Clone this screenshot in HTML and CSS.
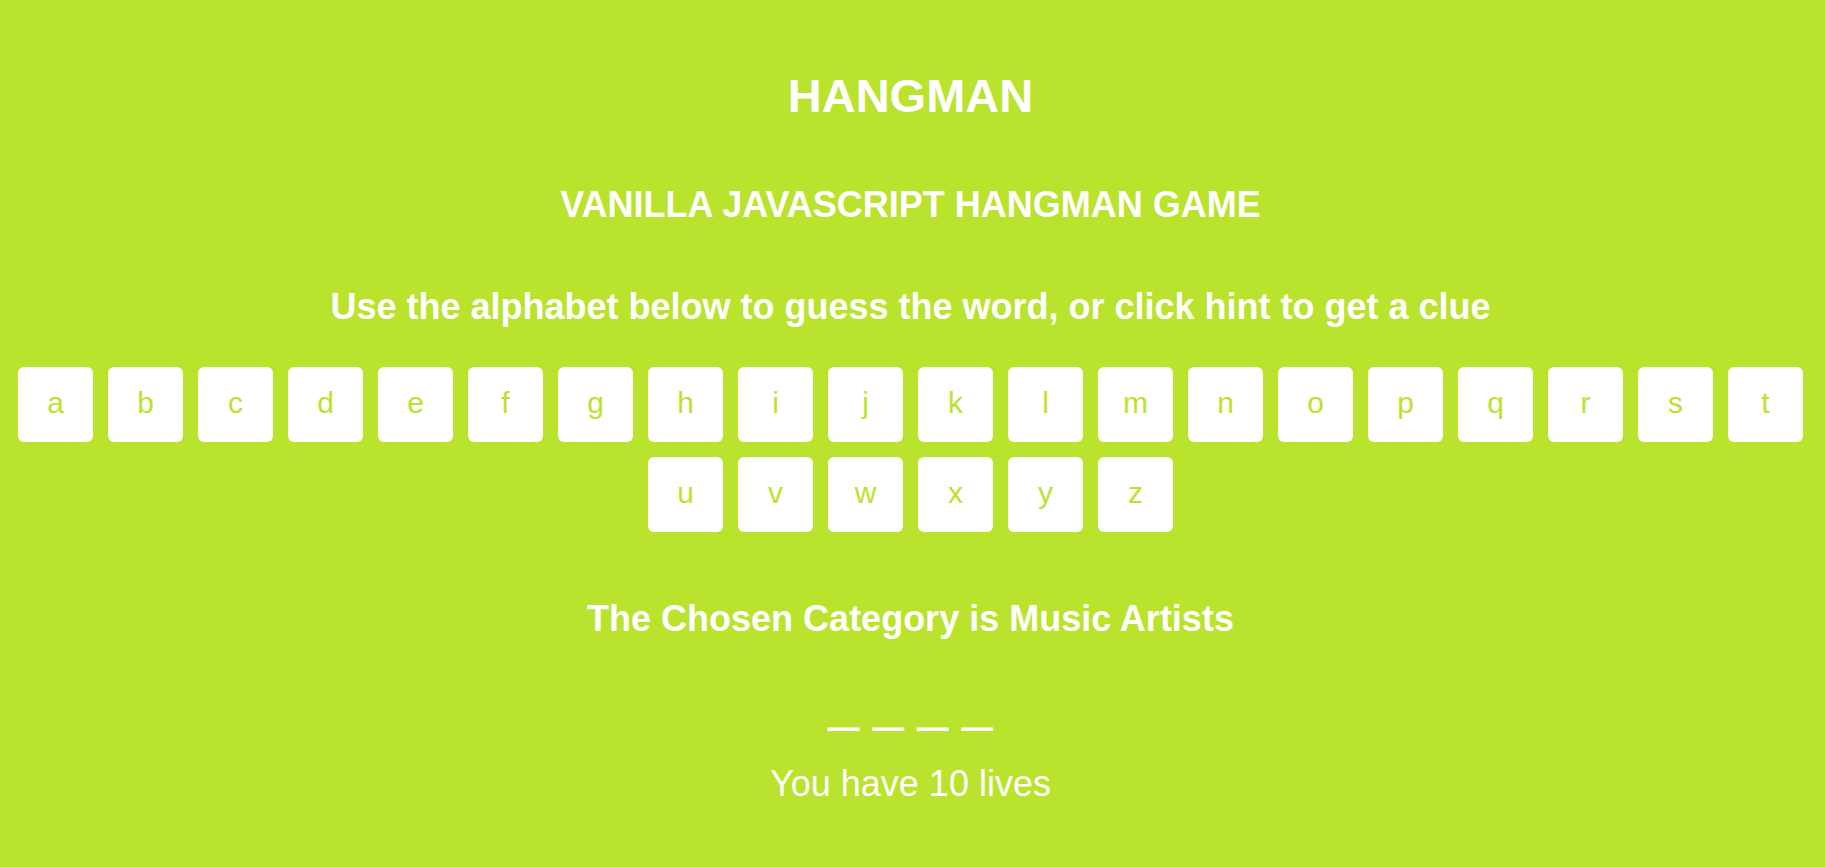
FILE: index.html
```html
<!DOCTYPE html>
<html lang="en">
<head>
<meta charset="utf-8">
<title>Hangman</title>
<link rel="stylesheet" href="styles.css">
</head>
<body>
<div class="wrapper">
  <h1 class="title">HANGMAN</h1>
  <h2 class="subtitle">VANILLA JAVASCRIPT HANGMAN GAME</h2>
  <p class="instructions">Use the alphabet below to guess the word, or click hint to get a clue</p>
  <ul class="alphabet">
    <li class="letter">a</li><li class="letter">b</li><li class="letter">c</li><li class="letter">d</li><li class="letter">e</li><li class="letter">f</li><li class="letter">g</li><li class="letter">h</li><li class="letter">i</li><li class="letter">j</li><li class="letter">k</li><li class="letter">l</li><li class="letter">m</li><li class="letter">n</li><li class="letter">o</li><li class="letter">p</li><li class="letter">q</li><li class="letter">r</li><li class="letter">s</li><li class="letter">t</li><li class="letter">u</li><li class="letter">v</li><li class="letter">w</li><li class="letter">x</li><li class="letter">y</li><li class="letter">z</li>
  </ul>
  <p class="category">The Chosen Category is Music Artists</p>
  <ul class="word">
    <li class="guess">_</li><li class="guess">_</li><li class="guess">_</li><li class="guess">_</li>
  </ul>
  <p class="lives">You have 10 lives</p>
</div>
</body>
</html>
```

FILE: styles.css
```css
html, body {
  margin: 0;
  padding: 0;
}

body {
  background: #b9e32c;
  color: #ffffff;
  font-family: "Liberation Sans", Arial, sans-serif;
  height: 867px;
  overflow: hidden;
}

.wrapper {
  padding: 72px 4px 0 0;
  text-align: center;
}

.title {
  margin: 0;
  font-size: 47px;
  line-height: 47px;
  font-weight: bold;
}

.subtitle {
  margin: 68px 0 0;
  font-size: 36px;
  line-height: 36px;
  font-weight: bold;
}

.instructions {
  margin: 66px 0 0;
  font-size: 36px;
  line-height: 36px;
  font-weight: bold;
}

.alphabet {
  list-style: none;
  margin: 42px 0 0;
  padding: 0;
  display: flex;
  flex-wrap: wrap;
  justify-content: center;
  gap: 15px;
}

.letter {
  width: 75px;
  height: 75px;
  box-sizing: border-box;
  background: #ffffff;
  border-radius: 6px;
  color: #b9e32c;
  font-size: 30px;
  line-height: 30px;
  padding-top: 21px;
  cursor: pointer;
}

.category {
  margin: 69px 0 0;
  font-size: 36px;
  line-height: 36px;
  font-weight: bold;
}

.word {
  list-style: none;
  margin: 37px 0 0;
  padding: 0;
  display: flex;
  justify-content: center;
  font-size: 55px;
  line-height: 55px;
}

.guess {
  margin: 0 7px;
}

.lives {
  margin: 37px 0 0;
  font-size: 36px;
  line-height: 36px;
}
```
